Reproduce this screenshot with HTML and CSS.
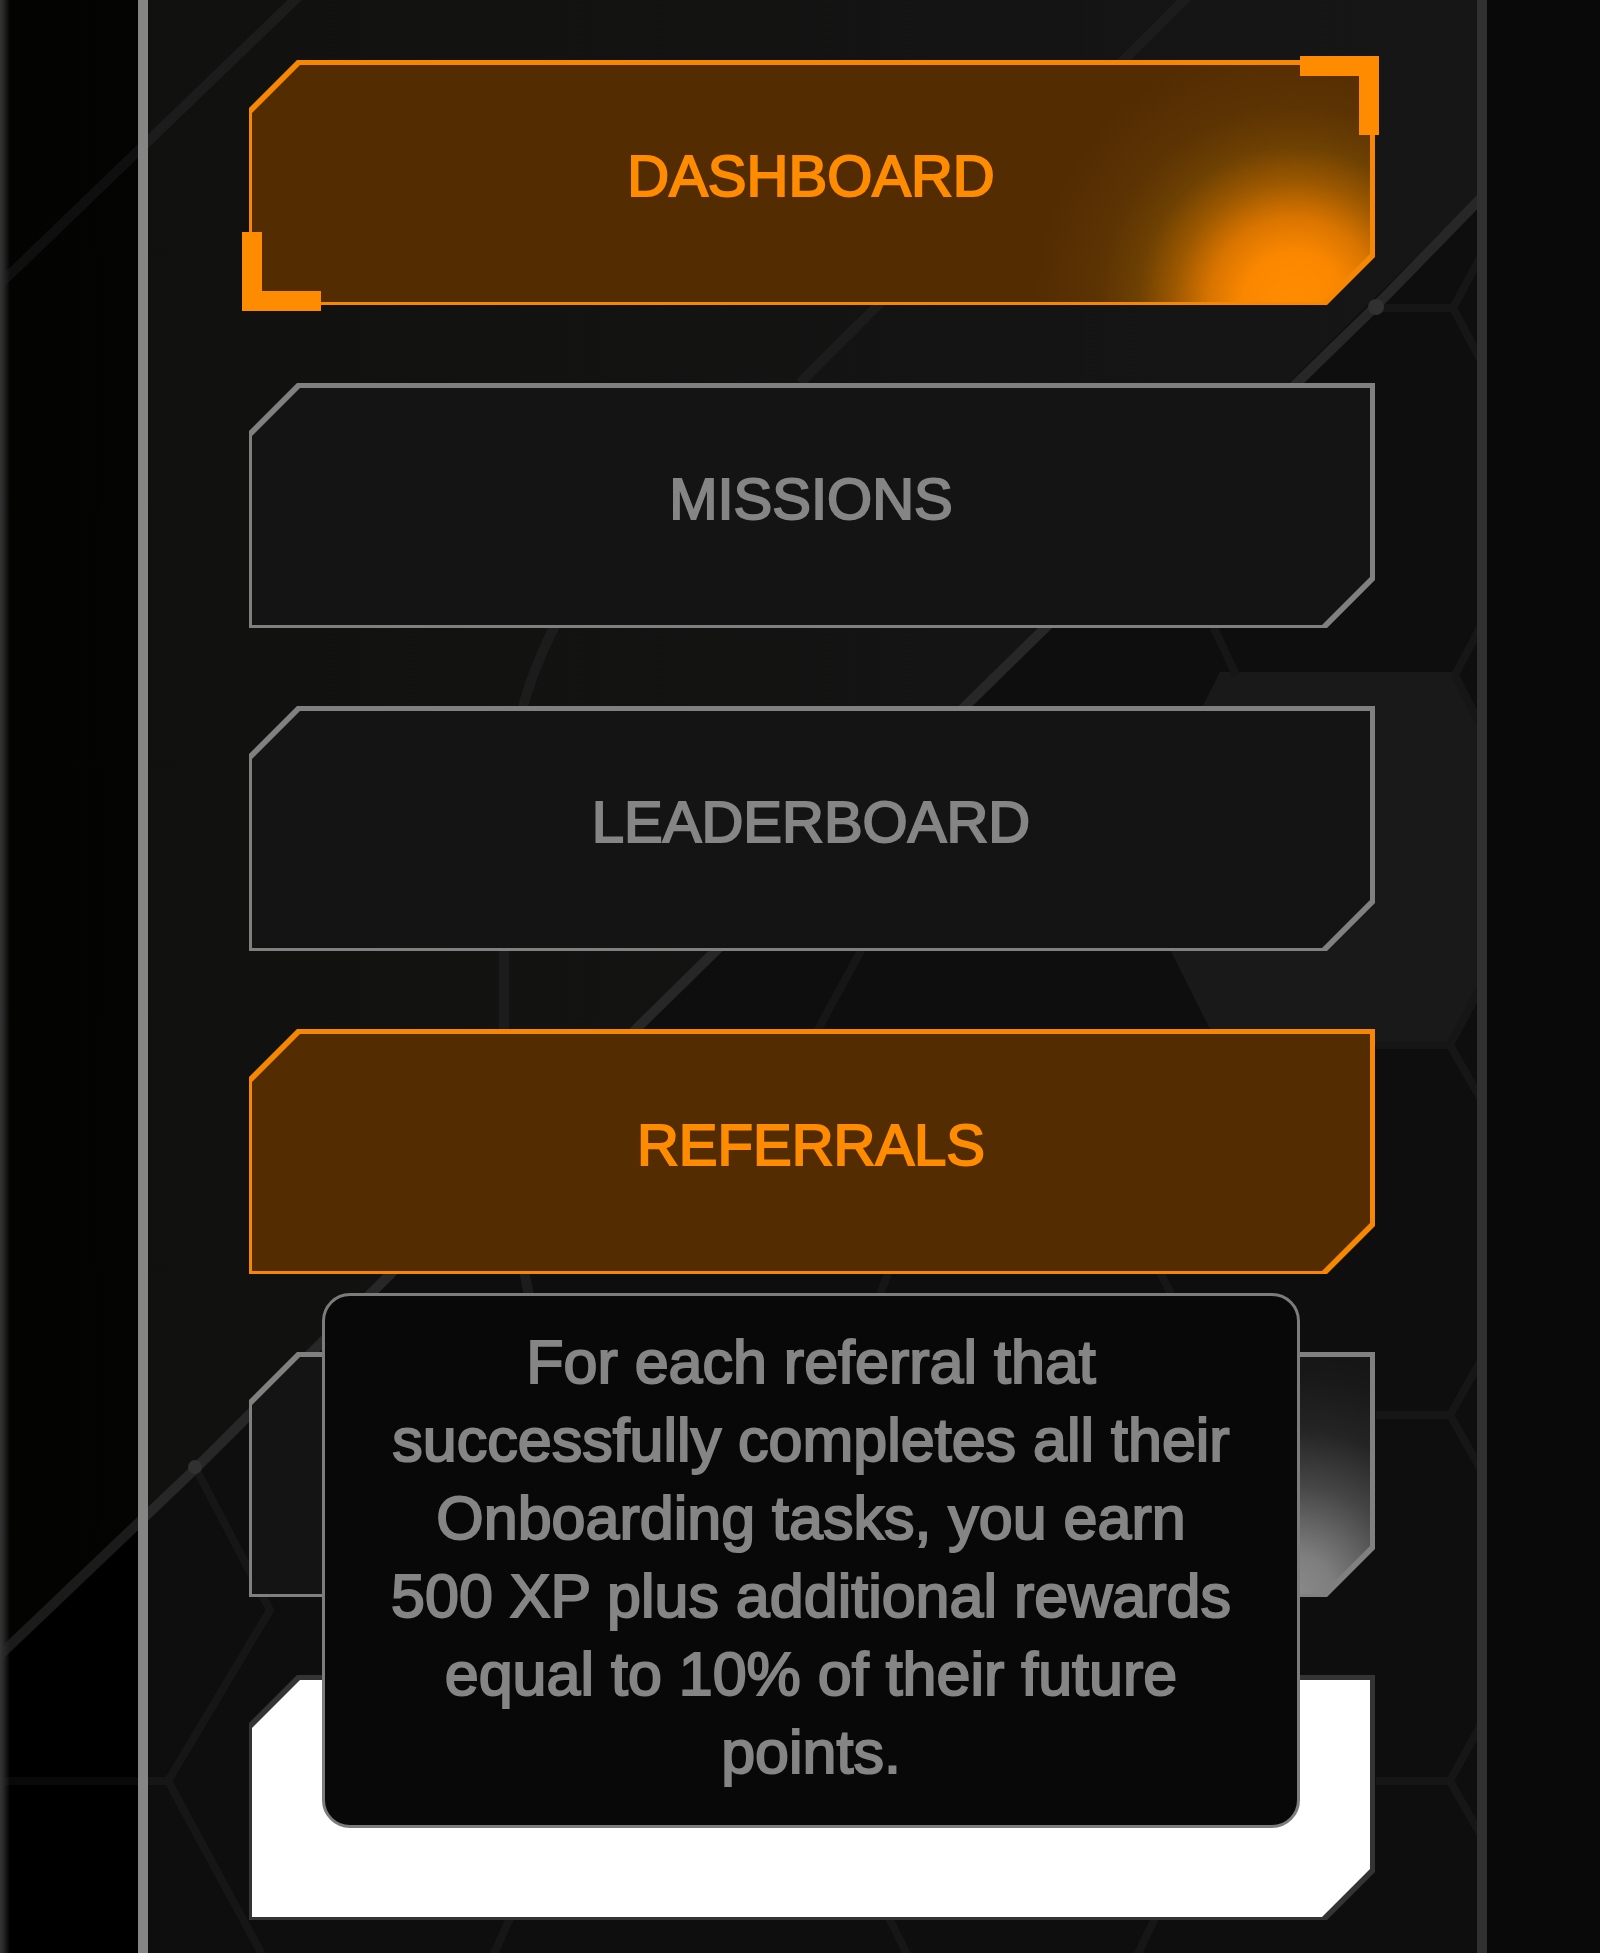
FILE: index.html
```html
<!DOCTYPE html>
<html lang="en">
<head>
<meta charset="utf-8">
<meta name="viewport" content="width=device-width, initial-scale=1">
<title>Dashboard</title>
<link rel="stylesheet" href="styles.css">
</head>
<body>
<div class="stage">
  <svg class="backdrop" viewBox="0 0 1487 1953" preserveAspectRatio="xMinYMin slice" aria-hidden="true">
    <defs>
      <linearGradient id="shade" x1="0" y1="0" x2="1" y2="0">
        <stop offset="0" stop-color="#030302"/>
        <stop offset="1" stop-color="#090909"/>
      </linearGradient>
    </defs>
    <path class="shade-light" d="M0 0H1487V187L0 1655Z"/>
    <path class="hex-fill" d="M1220 672H1455L1545 860L1450 1045H1218L1125 860Z"/>
    <path class="line-faint" d="M303 -8L0 284"/>
    <path class="line-faint" d="M1192 -8L800 383"/>
    <path class="line-faint" d="M558 620Q504 720 504 850V1029Q506 1190 530 1300"/>
    <g class="line-hex">
      <path d="M1375 308H1453L1487 245M1453 308L1487 372"/>
      <path d="M1208 615L1236 675M1455 675L1487 615M1455 675L1487 738"/>
      <path d="M864 945L815 1035M1376 1045H1450L1487 975M1450 1045L1487 1110"/>
      <path d="M890 1268L878 1300M1158 1268L1174 1300"/>
      <path d="M1376 1415H1450L1487 1350M1450 1415L1487 1480"/>
      <path d="M1376 1781H1450L1487 1714M1450 1781L1487 1846"/>
      <path d="M195 1467L270 1610L168 1781H0M168 1781L265 1960"/>
      <path d="M511 1916L492 1958M888 1916L909 1958M1156 1916L1136 1958"/>
    </g>
    <path class="line-main" d="M1487 192L1375 307L1040 633L632 1033L195 1469L0 1655"/>
    <circle class="node" cx="1376" cy="307" r="8"/>
    <circle class="node" cx="195" cy="1467" r="7"/>
  </svg>
  <nav class="panel">
    <ul class="menu">
      <li class="item">
        <button class="tile tile-active" type="button">
          <span class="face face-glow">DASHBOARD</span>
          <span class="corner corner-top"></span>
          <span class="corner corner-bottom"></span>
        </button>
      </li>
      <li class="item"><button class="tile" type="button"><span class="face">MISSIONS</span></button></li>
      <li class="item"><button class="tile" type="button"><span class="face">LEADERBOARD</span></button></li>
      <li class="item item-open">
        <button class="tile tile-active" type="button" aria-describedby="tip"><span class="face">REFERRALS</span></button>
        <div class="tooltip" id="tip" role="tooltip">For each referral that successfully completes all their Onboarding tasks, you earn 500 XP plus additional rewards equal to 10% of their future points.</div>
      </li>
      <li class="item"><button class="tile" type="button"><span class="face face-glow"></span></button></li>
      <li class="item"><button class="tile tile-light" type="button"><span class="face"></span></button></li>
    </ul>
  </nav>
</div>
</body>
</html>
```
FILE: styles.css
```css
* {
  box-sizing: border-box;
}

body {
  margin: 0;
  background: #090909;
  color: #858585;
  font-family: "Liberation Sans", Arial, Helvetica, sans-serif;
}

.stage {
  position: relative;
  min-height: 100vh;
  margin-right: 113px;
  background: #000;
  overflow: hidden;
}

.stage::after {
  content: "";
  position: absolute;
  inset: 0 auto 0 0;
  width: 10px;
  background: linear-gradient(90deg, #343434, #2a2a2a 3px, transparent);
}

.backdrop {
  position: absolute;
  inset: 0;
  width: 100%;
  height: 100%;
}

.backdrop path {
  fill: none;
}

.backdrop .shade-light {
  fill: url(#shade);
}

.backdrop .hex-fill {
  fill: #0c0c0c;
}

.line-faint {
  stroke: #0f0f0f;
  stroke-width: 10;
}

.line-hex {
  stroke: #090909;
  stroke-width: 8;
}

.line-main {
  stroke: #1b1b1b;
  stroke-width: 10;
}

.node {
  fill: #262626;
}

.panel {
  position: relative;
  min-height: 100vh;
  margin-left: 138px;
  padding: 60px 102px 33px 101px;
  border-left: 10px solid #858585;
  border-right: 10px solid #303030;
  background: rgba(255, 255, 255, 0.054);
}

.menu {
  display: flex;
  flex-direction: column;
  gap: 78px;
  margin: 0;
  padding: 0;
  list-style: none;
}

.item {
  position: relative;
}

.item-open {
  z-index: 1;
}

.tile {
  --line: #808080;
  --fill: #141414;
  --cut: 48px;
  --shape: polygon(var(--cut) 0, 100% 0, 100% calc(100% - var(--cut)), calc(100% - var(--cut)) 100%, 0 100%, 0 var(--cut));
  position: relative;
  display: flex;
  width: 100%;
  height: 245px;
  padding: 5px 5px 3px 3px;
  border: 0;
  background: none;
  color: #858585;
  font-family: inherit;
  font-size: 58px;
  line-height: 66px;
  -webkit-text-stroke: 2px currentColor;
  cursor: pointer;
}

.tile::before {
  content: "";
  position: absolute;
  inset: 0;
  background: var(--line);
  clip-path: var(--shape);
}

.tile-active {
  --line: #f58702;
  --fill: #532c02;
  color: #ff8c00;
}

.tile-light {
  --line: #343434;
  --fill: #fff;
}

.face {
  position: relative;
  display: flex;
  flex: 1;
  align-items: center;
  justify-content: center;
  padding-bottom: 16px;
  background: var(--fill);
  clip-path: var(--shape);
}

.face-glow {
  background: radial-gradient(circle at calc(100% - 76px) 100%, #8a8a8a 0, #7e7e7e 40px, #454545 110px, #242424 165px, #181818 220px, #141414 260px);
}

.tile-active .face-glow {
  background: radial-gradient(circle at calc(100% - 76px) 100%, #ff8c00 0, #fb8700 50px, #d87400 85px, #9c5800 120px, #6e4103 155px, #5c3303 195px, #532c02 260px);
}

.corner {
  position: absolute;
  width: 79px;
  height: 79px;
  border: 0 solid #ff8c00;
}

.corner-top {
  top: -4px;
  right: -4px;
  border-width: 20px 20px 0 0;
}

.corner-bottom {
  bottom: -6px;
  left: -7px;
  border-width: 0 0 20px 20px;
}

.tooltip {
  position: absolute;
  top: calc(100% + 19px);
  left: 73px;
  right: 75px;
  padding: 27px 60px 34px;
  border: 3px solid #7c7c7c;
  border-radius: 28px;
  background: #080808;
  font-size: 61px;
  line-height: 78px;
  text-align: center;
  -webkit-text-stroke: 2px currentColor;
}
```
